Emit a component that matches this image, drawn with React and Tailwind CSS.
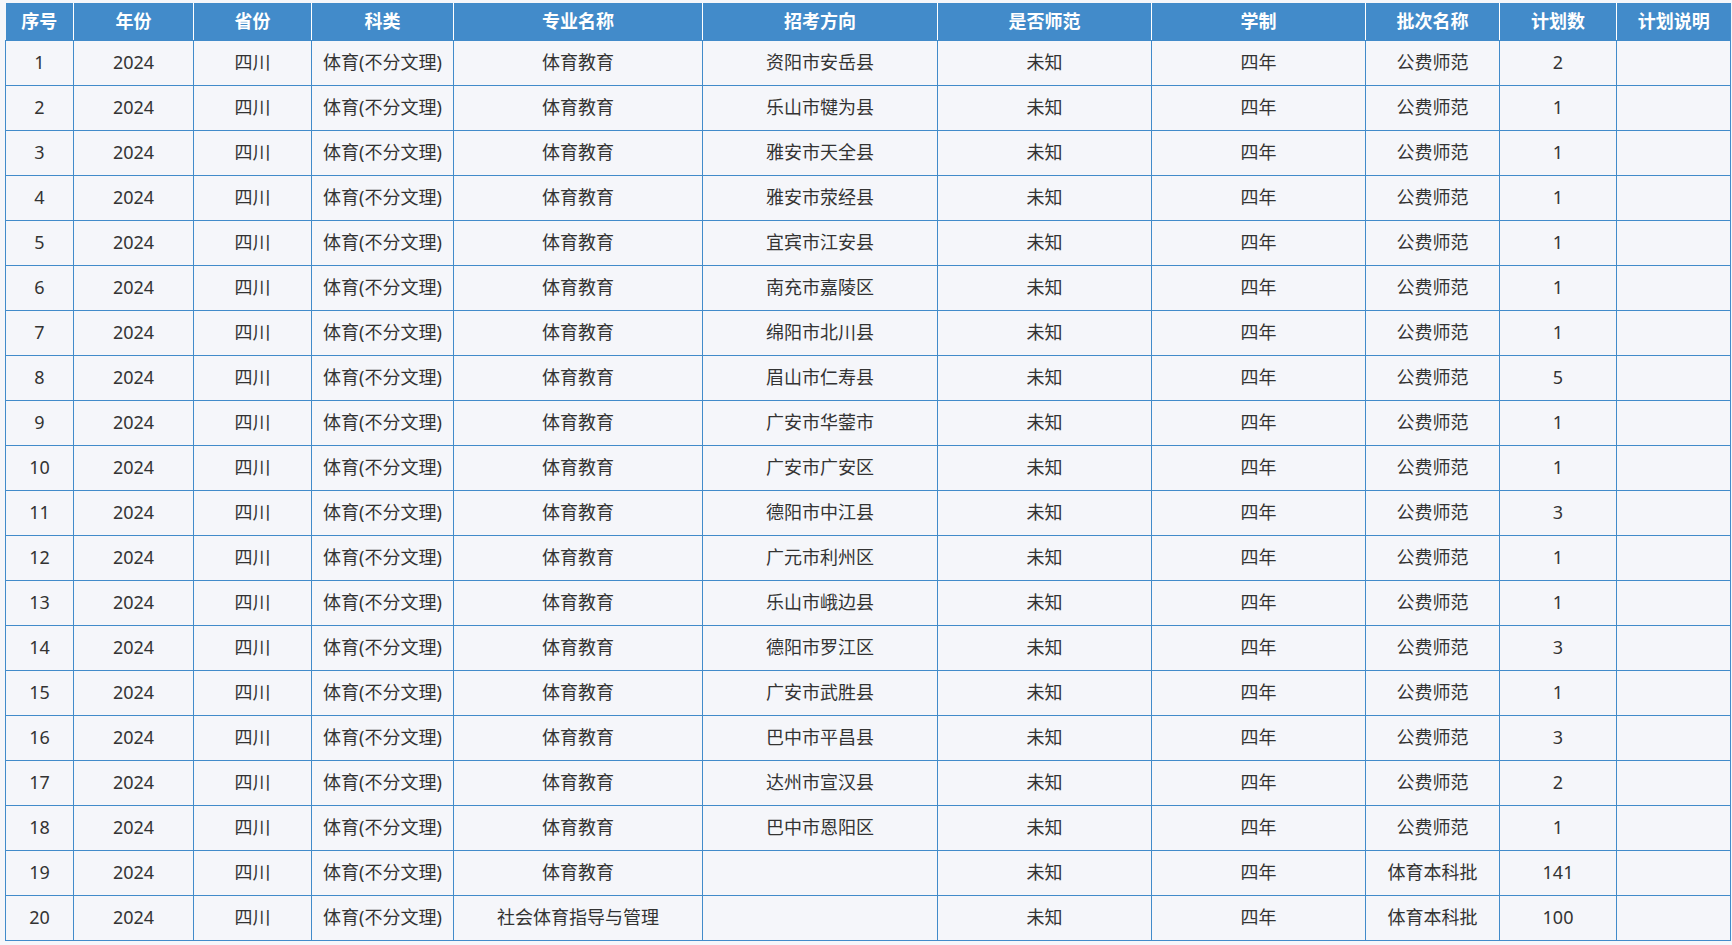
import React from 'react'

const cols = [68, 120, 118, 142, 249, 235, 214, 214, 134, 117, 114]
const headers = ['序号', '年份', '省份', '科类', '专业名称', '招考方向', '是否师范', '学制', '批次名称', '计划数', '计划说明']

const rows = [
    ['资阳市安岳县', '公费师范', 2],
    ['乐山市犍为县', '公费师范', 1],
    ['雅安市天全县', '公费师范', 1],
    ['雅安市荥经县', '公费师范', 1],
    ['宜宾市江安县', '公费师范', 1],
    ['南充市嘉陵区', '公费师范', 1],
    ['绵阳市北川县', '公费师范', 1],
    ['眉山市仁寿县', '公费师范', 5],
    ['广安市华蓥市', '公费师范', 1],
    ['广安市广安区', '公费师范', 1],
    ['德阳市中江县', '公费师范', 3],
    ['广元市利州区', '公费师范', 1],
    ['乐山市峨边县', '公费师范', 1],
    ['德阳市罗江区', '公费师范', 3],
    ['广安市武胜县', '公费师范', 1],
    ['巴中市平昌县', '公费师范', 3],
    ['达州市宣汉县', '公费师范', 2],
    ['巴中市恩阳区', '公费师范', 1],
    ['', '体育本科批', 141],
    ['', '体育本科批', 100],
]

export default function App() {
    return (
        <div
            className="min-h-[945px] bg-[#f5f6fa] pt-[3px] pl-[5px]"
            style={{ fontFamily: '"Noto Sans", "Noto Sans CJK SC", sans-serif' }}
        >
            <table className="border-collapse table-fixed w-[1725px] text-[18px] text-[#333]">
                <colgroup>
                    {cols.map((w, i) => <col key={i} style={{ width: w }} />)}
                </colgroup>
                <thead>
                    <tr className="bg-[#428bca]">
                        {headers.map((h, i) => (
                            <th
                                key={h}
                                className={`h-[37px] p-0 text-center font-bold text-white border-b border-b-[#428bca] ${i > 0 ? 'border-l border-l-white' : ''}`}
                            >
                                {h}
                            </th>
                        ))}
                    </tr>
                </thead>
                <tbody>
                    {rows.map((r, i) => {
                        const major = i === 19 ? '社会体育指导与管理' : '体育教育'
                        const cells = [i + 1, '2024', '四川', '体育(不分文理)', major, r[0], '未知', '四年', r[1], r[2], '']
                        return (
                            <tr key={i}>
                                {cells.map((c, j) => (
                                    <td key={j} className="h-[45px] p-0 text-center align-middle border border-[#428bca]">
                                        {c}
                                    </td>
                                ))}
                            </tr>
                        )
                    })}
                </tbody>
            </table>
        </div>
    )
}
